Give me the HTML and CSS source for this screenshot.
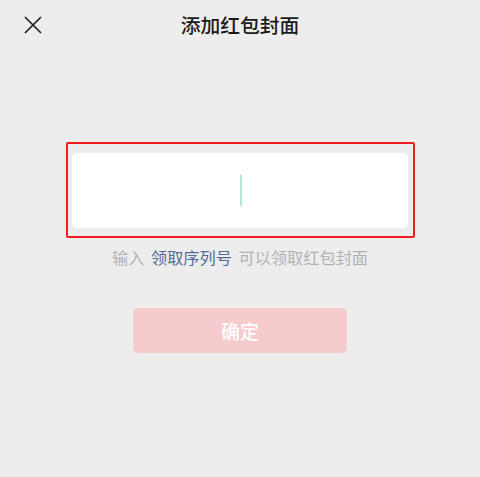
FILE: index.html
```html
<!DOCTYPE html>
<html lang="zh">
<head>
<meta charset="utf-8">
<title>添加红包封面</title>
<link rel="stylesheet" href="styles.css">
</head>
<body>
<div class="page">
  <header class="nav">
    <button class="close" aria-label="关闭">
      <svg width="18" height="18" viewBox="0 0 18 18"><path d="M1 1 L17 17 M17 1 L1 17" stroke="#1f1f1f" stroke-width="1.7" fill="none"/></svg>
    </button>
    <h1 class="title">添加红包封面</h1>
  </header>
  <main class="content">
    <div class="highlight">
      <div class="input-box"><span class="cursor"></span></div>
    </div>
    <p class="hint">输入 <span class="link">领取序列号</span> 可以领取红包封面</p>
    <button class="confirm">确定</button>
  </main>
</div>
</body>
</html>
```
FILE: styles.css
```css
html, body {
  margin: 0;
  padding: 0;
  background: #ededed;
}
.page {
  width: 480px;
  height: 477px;
  font-family: "Noto Sans CJK SC", "Noto Sans", sans-serif;
  position: relative;
}
.nav {
  height: 50px;
  display: flex;
  align-items: center;
  justify-content: center;
  position: relative;
}
.close {
  position: absolute;
  left: 24px;
  top: 16px;
  width: 18px;
  height: 18px;
  padding: 0;
  border: 0;
  background: none;
  display: block;
}
.close svg { display: block; }
.title {
  margin: 0;
  font-size: 19.8px;
  font-weight: 500;
  color: #1a1a1a;
  line-height: 1;
}
.content {
  display: flex;
  flex-direction: column;
  align-items: center;
  padding-top: 92px;
}
.highlight {
  width: 345px;
  height: 92px;
  border: 2px solid #f01e1e;
  border-radius: 2px;
  display: flex;
  align-items: center;
  justify-content: center;
}
.input-box {
  width: 336px;
  height: 75px;
  background: #ffffff;
  border-radius: 5px;
  display: flex;
  align-items: center;
  justify-content: center;
}
.cursor {
  width: 2px;
  height: 31px;
  background: #b8e6d6;
  margin-left: 2px;
}
.hint {
  margin: 8px 0 0;
  font-size: 16.2px;
  line-height: 22px;
  color: #b2b2b2;
  text-align: center;
  word-spacing: 3px;
}
.link {
  color: #576b95;
  font-weight: 400;
}
.confirm {
  margin-top: 40px;
  width: 214px;
  height: 45px;
  border: 0;
  border-radius: 5px;
  background: #f5cbcd;
  color: #ffffff;
  font-family: "Noto Sans CJK SC", sans-serif;
  font-size: 19px;
  font-weight: 500;
  padding: 0;
}
```
